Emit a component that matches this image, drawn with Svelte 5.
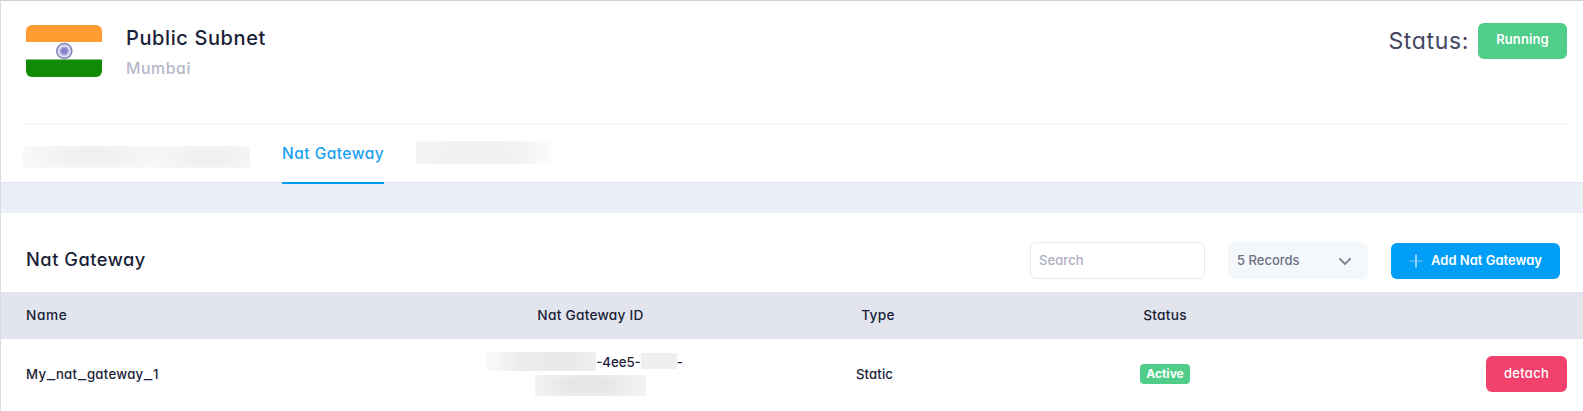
<script>
  const gateway = { name: 'My_nat_gateway_1', type: 'Static', status: 'Active' };
  const parts = gateway.name.split(/(_)/);
</script>

<main class="page">
  <section class="summary">
    <header class="top">
      <svg class="flag" viewBox="0 0 76 52">
        <defs><clipPath id="round"><rect width="76" height="52" rx="6" /></clipPath></defs>
        <g clip-path="url(#round)">
          <rect width="76" height="52" fill="#fff" />
          <rect width="76" height="17" fill="#ff9c32" />
          <rect y="34.5" width="76" height="17.5" fill="#118a08" />
        </g>
        <circle cx="38.3" cy="26" r="7.5" fill="#dcdcf2" stroke="#8585b5" stroke-width="1.6" />
        <circle cx="38.3" cy="26" r="3.8" fill="#8682cb" stroke="#aaa8df" stroke-width="1.4" />
      </svg>
      <div class="place">
        <h1>Public Subnet</h1>
        <p>Mumbai</p>
      </div>
      <div class="state">
        <span class="label">Status:</span>
        <span class="running">Running</span>
      </div>
    </header>
    <nav class="tabs">
      <span class="veil veil-a"></span>
      <a class="active" href="#nat">Nat Gateway</a>
      <span class="veil veil-b"></span>
    </nav>
  </section>

  <section class="list">
    <div class="toolbar">
      <h2>Nat Gateway</h2>
      <div class="search">Search</div>
      <div class="select">
        <span>5 Records</span>
        <svg width="14" height="10" viewBox="0 0 14 10"><path d="M1.5 2.300 7 8l5.500-5.700" fill="none" stroke="#77778f" stroke-width="1.7" /></svg>
      </div>
      <button class="add">
        <svg width="14" height="14" viewBox="0 0 14 14"><path d="M.5 7h13" stroke="#80cdfc" stroke-width="1" /><path d="M7 .5v13" stroke="#c9e9fe" stroke-width="1.4" /></svg>
        <span>Add Nat Gateway</span>
      </button>
    </div>
    <div class="row head">
      <span class="name">Name</span>
      <span>Nat Gateway ID</span>
      <span>Type</span>
      <span>Status</span>
    </div>
    <div class="row body">
      <span class="name">{#each parts as part}{#if part === '_'}<span class="score">_</span>{:else}{part}{/if}{/each}</span>
      <div class="ident">
        <div class="line"><i class="veil veil-c"></i><span>-4ee5-</span><i class="veil veil-d"></i><span>-</span></div>
        <i class="veil veil-e"></i>
      </div>
      <span class="type">{gateway.type}</span>
      <div class="cell"><span class="badge">{gateway.status}</span></div>
      <div class="action"><button class="detach">detach</button></div>
    </div>
  </section>
</main>

<style>
  :global(body) { background: #fff; }
  .page {
    box-sizing: border-box; width: 100%; height: 411px; overflow: hidden;
    border-top: 1px solid #cfcfcf; border-left: 1px solid #dcdcdf;
    background: #ebeff8; color: #1b1e38;
    font-family: Inter, "Open Sans", sans-serif; font-feature-settings: "cv11"; font-weight: 500;
  }
  h1, h2, p { margin: 0; font-weight: 540; white-space: nowrap; }
  .summary { box-sizing: border-box; height: 182px; padding: 0 16px 0 25px; background: #fff; border-bottom: 1px solid #dfe3ed; }
  .top { box-sizing: border-box; display: flex; height: 124px; padding-top: 22px; border-bottom: 2px solid #f6f6f8; }
  .flag { width: 76px; height: 52px; margin-top: 2px; }
  .place { margin-left: 24px; flex: 1; }
  h1 { font-size: 20px; line-height: 30px; letter-spacing: .6px; }
  p { margin-top: 4px; font-size: 15.800px; line-height: 24px; letter-spacing: .6px; color: #b7b8c9; }
  .state { display: flex; gap: 9px; height: 36px; align-items: center; }
  .label { font-size: 23px; font-weight: 400; letter-spacing: .65px; line-height: 36px; color: #43465f; }
  .running { display: flex; align-items: center; justify-content: center; box-sizing: border-box; padding-bottom: 4px; width: 89px; height: 36px; border-radius: 6px; background: #50cd89; color: #fff; font-size: 13px; font-weight: 600; letter-spacing: .1px; }
  .tabs { display: flex; height: 58px; }
  .active { position: relative; display: block; box-sizing: border-box; width: 102px; margin-left: 32px; height: 59px; border-bottom: 2px solid #009ef7; color: #1b9ff3; font-size: 15.500px; letter-spacing: .48px; line-height: 57px; white-space: nowrap; text-decoration: none; }
  .veil { display: block; flex: none; }
  .veil-a { width: 227px; height: 22px; margin: 21px 0 0 -3px; background: radial-gradient(ellipse 75px 20px at 30% 40%, #f0f0f2 30%, transparent), radial-gradient(ellipse 65px 20px at 82% 50%, #f0f0f2 30%, transparent), #f9f9fa; }
  .veil-b { width: 135px; height: 23px; margin: 16px 0 0 32px; background: radial-gradient(ellipse 80px 20px at 45% 55%, #f0f0f2 30%, transparent), linear-gradient(90deg, #f6f6f7 75%, #fdfdfd); }
  .list { height: 198px; margin-top: 30px; background: #fff; }
  .toolbar { display: flex; box-sizing: border-box; height: 79px; padding: 29px 23px 0 25px; }
  h2 { flex: 1; font-size: 18.300px; line-height: 34px; letter-spacing: .5px; }
  .search { box-sizing: border-box; width: 175px; height: 37px; padding-left: 8px; border: 1px solid #e8e8f1; border-radius: 6px; color: #adafc2; font-size: 13px; line-height: 34px; letter-spacing: .1px; }
  .select { display: flex; justify-content: space-between; box-sizing: border-box; align-items: center; width: 140px; height: 37px; margin-left: 23px; padding: 0 16px 0 9px; border-radius: 6px; background: #f5f8fa; color: #6f7088; font-size: 13px; }
  .select span, .add span { padding-bottom: 2px; }
  button { font: inherit; border: 0; padding: 0; color: #fff; font-size: 13px; border-radius: 6px; display: flex; align-items: center; justify-content: center; }
  .add { gap: 8px; width: 169px; height: 36px; margin: 1px 0 0 23px; background: #009ef7; font-weight: 560; }
  .row { display: grid; grid-template-columns: 445px 289px 286px 288px 1fr; align-items: center; text-align: center; }
  .name { text-align: left; padding-left: 25px; }
  .head { box-sizing: border-box; height: 47px; padding-bottom: 2px; background: #e2e5ee; font-size: 13.700px; letter-spacing: .25px; }
  .head .name { letter-spacing: .6px; }
  .body { height: 70px; font-size: 13.200px; }
  .body .name { letter-spacing: .25px; padding-bottom: 1px; }
  .score { display: inline-block; margin: 0 1.800px; transform: scaleX(1.400); letter-spacing: 0; }
  .ident { display: flex; flex-direction: column; align-items: center; gap: 4px; margin-left: -12px; }
  .line { display: flex; align-items: center; height: 19px; }
  .veil-c { width: 110px; height: 19px; background: linear-gradient(90deg, #fafafa, #ebebed 35%, #e9e9eb 75%, #efeff0); }
  .veil-d { width: 36px; height: 16px; margin-bottom: 2px; background: #efefef; }
  .veil-e { width: 111px; height: 21px; margin-left: 12px; background: radial-gradient(ellipse 62px 20px at 48% 45%, #e6e6e8 30%, transparent), #f4f4f5; }
  .type { margin-left: -7px; padding-bottom: 1px; letter-spacing: .1px; }
  .cell { display: flex; justify-content: center; }
  .badge { display: flex; align-items: center; justify-content: center; box-sizing: border-box; width: 50px; height: 20px; padding-bottom: 2px; border-radius: 4px; background: #50cd89; color: #fff; font-size: 12px; font-weight: 700; }
  .action { display: flex; justify-content: flex-end; padding-right: 16px; }
  .detach { box-sizing: border-box; width: 81px; height: 36px; padding-bottom: 3px; background: #f1416c; letter-spacing: .3px; }
</style>
